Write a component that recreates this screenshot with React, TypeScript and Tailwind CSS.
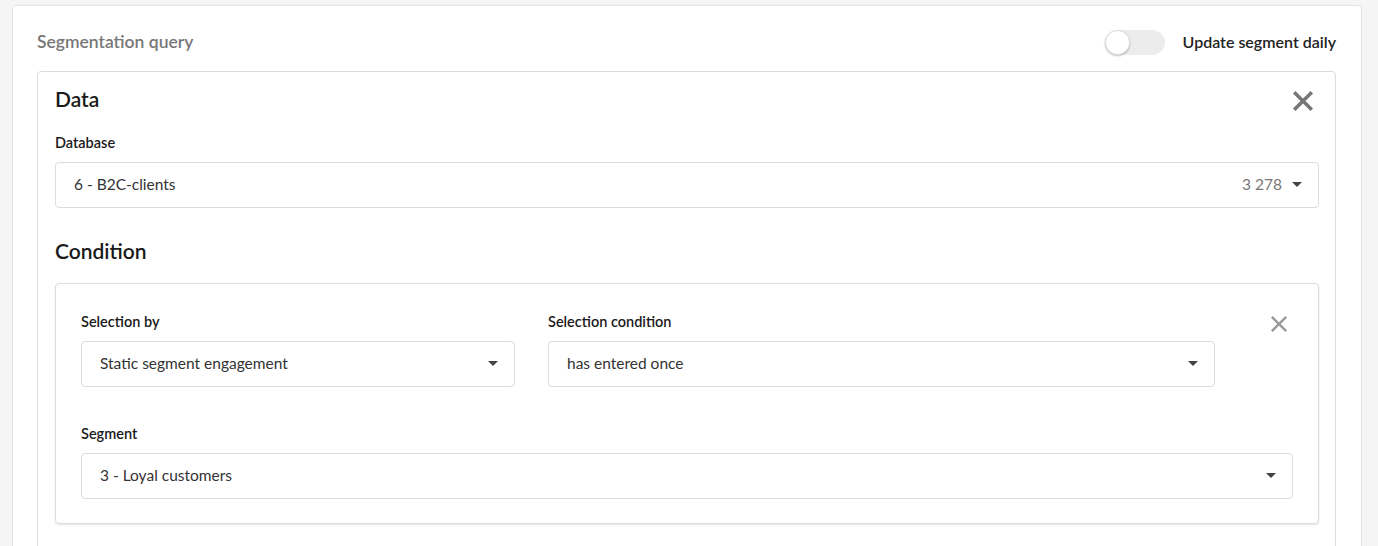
import React from "react";

const Caret = () => (
  <svg width="10" height="6" viewBox="0 0 10 6" className="shrink-0">
    <path d="M0 0 L10 0 L5 5 Z" fill="#444" />
  </svg>
);

const BigX = ({ size, color, stroke }: { size: number; color: string; stroke: number }) => (
  <svg width={size} height={size} viewBox="0 0 20 20">
    <path d="M2 2 L18 18 M18 2 L2 18" stroke={color} strokeWidth={stroke} strokeLinecap="butt" />
  </svg>
);

const Select = ({ value, extra, className = "" }: { value: string; extra?: string; className?: string }) => (
  <div className={`h-[46px] border border-[#dcdcdc] rounded-[4px] bg-white flex items-center pl-[18px] pr-[16px] ${className}`}>
    <span className="flex-1 text-[15.5px] text-[#333]">{value}</span>
    {extra && <span className="text-[15.5px] text-[#777] mr-[10px]">{extra}</span>}
    <Caret />
  </div>
);

export default function App() {
  return (
    <div className="w-[1378px] h-[546px] bg-[#f5f5f5] overflow-hidden pl-[12px] pr-[16px] pt-[5px]" style={{ fontFamily: "'Source Sans Pro', Lato, 'Noto Sans', sans-serif" }}>
      <div className="bg-white border border-[#e3e3e3] rounded-[4px] h-[600px] pl-[24px] pr-[25px] pt-[21px]">
        <div className="flex items-center h-[30px]">
          <div className="flex-1 text-[17.5px] font-semibold text-[#777]">Segmentation query</div>
          <div className="w-[60px] h-[25px] rounded-full bg-[#ececec] relative mr-[18px]">
            <div className="absolute left-0 top-0 w-[25px] h-[25px] rounded-full bg-white border border-[#e0e0e0] shadow-[0_1px_2px_rgba(0,0,0,0.25)]" />
          </div>
          <div className="text-[16px] font-semibold text-[#222]">Update segment daily</div>
        </div>
        <div className="mt-[14px] border border-[#dcdcdc] rounded-[4px] pl-[17px] pr-[16px] pt-[15px] h-[520px]">
          <div className="flex items-center h-[24px]">
            <div className="flex-1 text-[21px] font-semibold text-[#1a1a1a]">Data</div>
            <div className="mr-[5px] mt-[4px]"><BigX size={22} color="#777" stroke={3.2} /></div>
          </div>
          <div className="mt-[23px] text-[14.5px] font-semibold text-[#1a1a1a] leading-[18px]">Database</div>
          <Select className="mt-[10px]" value="6 - B2C-clients" extra="3 278" />
          <div className="mt-[30px] text-[21px] font-semibold text-[#1a1a1a] leading-[26px]">Condition</div>
          <div className="mt-[19px] border border-[#dcdcdc] rounded-[4px] shadow-[0_1px_2px_rgba(0,0,0,0.12)] px-[25px] pt-[29px] pb-[24px]">
            <div className="flex">
              <div className="w-[434px]">
                <div className="text-[14.5px] font-semibold text-[#1a1a1a] leading-[18px]">Selection by</div>
                <Select className="mt-[10px]" value="Static segment engagement" />
              </div>
              <div className="w-[667px] ml-[33px]">
                <div className="text-[14.5px] font-semibold text-[#1a1a1a] leading-[18px]">Selection condition</div>
                <Select className="mt-[10px]" value="has entered once" />
              </div>
              <div className="flex-1 flex justify-end pr-[5px] pt-[2px]">
                <BigX size={18} color="#999" stroke={2.6} />
              </div>
            </div>
            <div className="mt-[38px] text-[14.5px] font-semibold text-[#1a1a1a] leading-[18px]">Segment</div>
            <Select className="mt-[10px]" value="3 - Loyal customers" />
          </div>
        </div>
      </div>
    </div>
  );
}
